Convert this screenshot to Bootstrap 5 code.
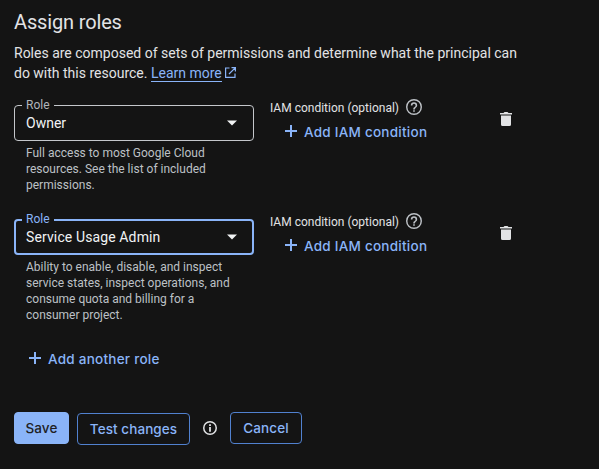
<!DOCTYPE html>
<html lang="en">
<head>
<meta charset="utf-8">
<meta name="viewport" content="width=device-width, initial-scale=1">
<title>Assign roles</title>
<link href="https://cdn.jsdelivr.net/npm/bootstrap@5.3.0/dist/css/bootstrap.min.css" rel="stylesheet">
<style>
body{background:#141414;color:#e2e3e5;font:14px/20px Roboto,sans-serif;height:469px;overflow:hidden}
svg{display:block;flex:none;fill:currentColor}
.panel{padding:10px 14px 0}
.title{font-size:20px;line-height:24px;margin:0 0 9px;letter-spacing:-.15px}
.intro{width:520px;margin:0 0 22px}
.learn{color:#8ab4f8;text-decoration:none;border-bottom:1px solid #8ab4f8;line-height:16px;display:inline-block}
.learn-icon{display:inline-block;color:#8ab4f8;vertical-align:0;fill:none;stroke:currentColor}
.role-row{height:114px}
.role-col{width:240px;margin-right:16px}
.select-box{height:36px;border:1px solid #c4c7cb;border-radius:4px;padding:0 15px 0 11px;color:#f1f3f4}
.select-box.active{border:2px solid #8ab4f8;padding:0 14px 0 10px;letter-spacing:.12px}
.float-tag{position:absolute;left:8px;top:-9px;padding:0 4px;background:#141414;font-size:12px;line-height:18px;color:#b1b5ba}
.active+.float-tag{color:#8ab4f8}
.hint{font-size:12px;line-height:16px;color:#bdc1c6;padding:4px 20px 0 12px}
.cond{width:230px;font-size:12px;line-height:16px;margin-top:-6px}
.cond-name{padding-top:1px;line-height:16px}
.help{color:#bdc1c6;margin-left:7px}
.g{font-family:Inter,sans-serif;font-weight:500;font-size:13.5px;line-height:20px;color:#8ab4f8;letter-spacing:.25px}
.add-cond{margin:6px 0 0 15px}
.add-text{margin-left:7px}
.plus{position:relative;top:-1px}
.trash{margin-top:7px}
.add-role{margin-top:16px;margin-left:15px}
.actions{margin-top:43px}
.b{height:32px;border-radius:4px;padding:0;--bs-btn-border-color:#5181cf}
.btn.g{letter-spacing:.08px}
.b-save{width:55px;background:#8ab4f8;color:#202124;border-color:#8ab4f8}
.b-test{width:113px;margin:1px 0 0 8px}
.b-cancel{width:72px}
.info{margin:9px 13px 0}
</style>
</head>
<body>
<svg class="d-none"><defs>
<symbol id="i-help" viewBox="2 2 20 20"><path d="M11 18h2v-2h-2v2zm1-16a10 10 0 1 0 0 20 10 10 0 0 0 0-20zm0 18.200a8.200 8.200 0 1 1 0-16.400 8.200 8.200 0 0 1 0 16.400zM12 6a4 4 0 0 0-4 4h2a2 2 0 0 1 4 0c0 2-3 1.750-3 5h2c0-2.250 3-2.500 3-5a4 4 0 0 0-4-4z"/></symbol>
<symbol id="i-plus" viewBox="0 0 12 12"><path d="M5 0h2v5h5v2H7v5H5V7H0V5h5z"/></symbol>
<symbol id="i-trash" viewBox="0 0 12 14"><path d="M0 1h3.500L4.500 0h3l1 1H12v1.500H0zM1 3.500h10V12.500a1.500 1.500 0 0 1-1.500 1.500h-7A1.500 1.500 0 0 1 1 12.500z"/></symbol>
</defs></svg>
<main class="panel">
<h1 class="title fw-normal">Assign roles</h1>
<p class="intro">Roles are composed of sets of permissions and determine what the principal can<br>do with this resource. <a class="learn" href="#">Learn more</a> <svg class="learn-icon" width="11" height="11" viewBox="0 0 11 11"><path stroke-width="1.200" d="M4.500 1H.6v9.400H10V6.500M6.500.6h3.900v3.900M10.200.8L4 7"/></svg></p>

<section class="role-row d-flex align-items-start">
 <div class="role-col"><div class="position-relative">
  <div class="select-box d-flex align-items-center justify-content-between"><span>Owner</span><svg width="12" height="6" viewBox="0 0 12 6"><path d="M1 .5h10L6 5.500z"/></svg></div>
  <label class="float-tag">Role</label></div>
  <div class="hint">Full access to most Google Cloud resources. See the list of included permissions.</div>
 </div>
 <div class="cond"><div class="d-flex align-items-start"><span class="cond-name">IAM condition (optional)</span><svg class="help" width="16" height="16"><use href="#i-help"/></svg></div>
  <div class="add-cond g d-flex align-items-center"><svg class="plus" width="12" height="12"><use href="#i-plus"/></svg><span class="add-text">Add IAM condition</span></div></div>
 <svg class="trash" width="12" height="14"><use href="#i-trash"/></svg>
</section>

<section class="role-row d-flex align-items-start">
 <div class="role-col"><div class="position-relative">
  <div class="select-box active d-flex align-items-center justify-content-between"><span>Service Usage Admin</span><svg width="12" height="6" viewBox="0 0 12 6"><path d="M1 .5h10L6 5.500z"/></svg></div>
  <label class="float-tag">Role</label></div>
  <div class="hint">Ability to enable, disable, and inspect service states, inspect operations, and consume quota and billing for a consumer project.</div>
 </div>
 <div class="cond"><div class="d-flex align-items-start"><span class="cond-name">IAM condition (optional)</span><svg class="help" width="16" height="16"><use href="#i-help"/></svg></div>
  <div class="add-cond g d-flex align-items-center"><svg class="plus" width="12" height="12"><use href="#i-plus"/></svg><span class="add-text">Add IAM condition</span></div></div>
 <svg class="trash" width="12" height="14"><use href="#i-trash"/></svg>
</section>

<div class="add-role g d-flex align-items-center"><svg class="plus" width="12" height="12"><use href="#i-plus"/></svg><span class="add-text">Add another role</span></div>
<div class="actions d-flex align-items-start">
 <button class="btn b b-save g">Save</button>
 <button class="btn b b-test g">Test changes</button>
 <svg class="info" width="14" height="14" viewBox="0 0 14 14"><path fill-rule="evenodd" d="M7 0a7 7 0 1 0 0 14A7 7 0 0 0 7 0zm0 1.500a5.500 5.500 0 1 1 0 11 5.500 5.500 0 0 1 0-11zM6.100 3.200h1.800v1.800H6.100zM6.100 6h1.800v4.800H6.100z"/></svg>
 <button class="btn b b-cancel g">Cancel</button>
</div>
</main>
<script src="https://cdn.jsdelivr.net/npm/bootstrap@5.3.0/dist/js/bootstrap.bundle.min.js"></script>
</body>
</html>
